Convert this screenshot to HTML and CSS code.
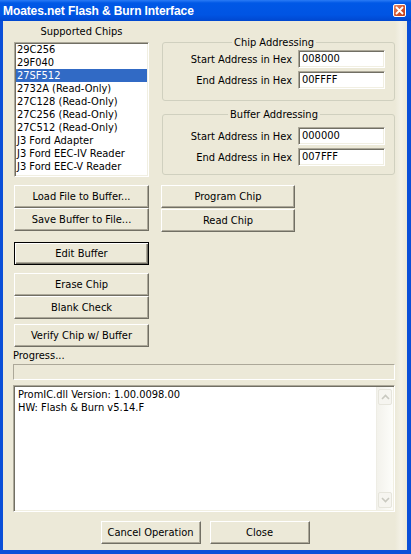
FILE: index.html
```html
<!DOCTYPE html>
<html lang="en">
<head>
	<meta charset="UTF-8">
	<title>Moates.net Flash &amp; Burn Interface</title>
	<link rel="stylesheet" href="styles.css">
</head>
<body>
	<div class="window">
		<div class="titlebar">
			<span class="title">Moates.net Flash &amp; Burn Interface</span>
			<span class="close">
				<svg width="9" height="9" viewBox="0 0 9 9"><path d="M1 1L8 8M8 1L1 8" stroke="#fff" stroke-width="1.8"/></svg>
			</span>
		</div>
		<div class="client">
			<div class="top">
				<div class="chips">
					<div class="caption">Supported Chips</div>
					<ul class="listbox">
						<li>29C256</li>
						<li>29F040</li>
						<li class="on">27SF512</li>
						<li>2732A (Read-Only)</li>
						<li>27C128 (Read-Only)</li>
						<li>27C256 (Read-Only)</li>
						<li>27C512 (Read-Only)</li>
						<li>J3 Ford Adapter</li>
						<li>J3 Ford EEC-IV Reader</li>
						<li>J3 Ford EEC-V Reader</li>
					</ul>
				</div>
				<div class="groups">
					<fieldset class="group chipgroup">
						<legend>Chip Addressing</legend>
						<div class="field"><span>Start Address in Hex</span><span class="edit">008000</span></div>
						<div class="field"><span>End Address in Hex</span><span class="edit">00FFFF</span></div>
					</fieldset>
					<fieldset class="group bufgroup">
						<legend>Buffer Addressing</legend>
						<div class="field"><span>Start Address in Hex</span><span class="edit">000000</span></div>
						<div class="field"><span>End Address in Hex</span><span class="edit">007FFF</span></div>
					</fieldset>
				</div>
			</div>
			<div class="actions">
				<div class="leftcol">
					<button class="btn">Load File to Buffer...</button>
					<button class="btn">Save Buffer to File...</button>
					<button class="btn default editbtn">Edit Buffer</button>
					<button class="btn erasebtn">Erase Chip</button>
					<button class="btn">Blank Check</button>
					<button class="btn verifybtn">Verify Chip w/ Buffer</button>
				</div>
				<div class="rightcol">
					<button class="btn">Program Chip</button>
					<button class="btn readbtn">Read Chip</button>
				</div>
			</div>
			<div class="progress-label">Progress...</div>
			<div class="progress"></div>
			<div class="log">
				<div class="logtext">
					<div>PromIC.dll Version: 1.00.0098.00</div>
					<div>HW: Flash &amp; Burn v5.14.F</div>
				</div>
				<div class="scrollbar">
					<span class="sbbtn"><svg width="9" height="6" viewBox="0 0 9 6"><path d="M1 5L4.5 1.5L8 5" fill="none" stroke="#c9c9c0" stroke-width="1.6"/></svg></span>
					<span class="sbbtn"><svg width="9" height="6" viewBox="0 0 9 6"><path d="M1 1L4.5 4.5L8 1" fill="none" stroke="#c9c9c0" stroke-width="1.6"/></svg></span>
				</div>
			</div>
			<div class="bottom">
				<button class="btn wide">Cancel Operation</button>
				<button class="btn wide">Close</button>
			</div>
		</div>
	</div>
</body>
</html>
```

FILE: styles.css
```css
body{
	margin: 0;
	font-family: "DejaVu Sans Condensed", "Liberation Sans", sans-serif;
	font-size: 11px;
	color: #000;
}
.window{
	width: 411px;
	height: 554px;
	display: flex;
	flex-direction: column;
	background-color: #0a4fd8;
}
.titlebar{
	height: 21px;
	display: flex;
	align-items: center;
	justify-content: space-between;
	padding: 0 5px 0 3px;
	background: linear-gradient(to bottom, #2a7bf5 0, #0058e6 3px, #0054e3 15px, #0047cf 21px);
	color: #fff;
}
.title{
	font: bold 12px "Liberation Sans", sans-serif;
	letter-spacing: -0.1px;
}
.close{
	width: 13px;
	height: 13px;
	box-sizing: border-box;
	border: 1px solid #fff;
	border-radius: 2px;
	background: linear-gradient(135deg, #e88a66, #d0502a 60%, #c2401c);
	display: flex;
	align-items: center;
	justify-content: center;
}
.client{
	flex: 1;
	margin: 0 4px 4px 3px;
	padding-left: 10px;
	background: linear-gradient(to right, #ece9d8 392px, #f3f1e6 398px, #ece9d8 404px);
}
.top{
	display: flex;
	height: 156px;
}
.chips{
	width: 135px;
	margin-left: 1px;
	padding-top: 4px;
}
.caption{
	text-align: center;
	line-height: 13px;
	margin-bottom: 4px;
}
ul,li{
	margin: 0;
	padding: 0;
	list-style: none;
}
.listbox{
	height: 135px;
	box-sizing: border-box;
	overflow: hidden;
	background-color: #fff;
	border: 1px solid;
	border-color: #aca899 #fff #fff #aca899;
	box-shadow: inset 1px 1px #716f64, inset -1px -1px #f1efe2;
	padding: 0 1px;
}
.listbox li{
	line-height: 13px;
	padding-left: 1px;
	white-space: nowrap;
}
.listbox li.on{
	background-color: #316ac5;
	color: #fff;
}
.groups{
	width: 233px;
	margin-left: 13px;
	padding-top: 15px;
}
.group{
	margin: 0;
	min-width: 0;
	border: 1px solid #d0d0bf;
	border-radius: 3px;
	padding: 1px 9px 11px 0;
}
.group legend{
	margin: 0 auto;
	padding: 0 2px;
	line-height: 13px;
}
.bufgroup{
	margin-top: 7px;
	padding-top: 6px;
	padding-bottom: 8px;
}
.field{
	display: flex;
	justify-content: flex-end;
	align-items: center;
	gap: 6px;
}
.field + .field{
	margin-top: 3px;
}
.edit{
	width: 87px;
	height: 18px;
	box-sizing: border-box;
	background-color: #fff;
	border: 1px solid;
	border-color: #aca899 #fff #fff #aca899;
	box-shadow: inset 1px 1px #716f64, inset -1px -1px #f1efe2;
	padding-left: 3px;
	line-height: 16px;
}
.actions{
	display: flex;
	margin-top: 8px;
}
.leftcol,.rightcol{
	display: flex;
	flex-direction: column;
}
.leftcol{
	width: 135px;
	margin-left: 1px;
}
.rightcol{
	width: 134px;
	margin-left: 12px;
}
.btn{
	height: 23px;
	padding: 0;
	font: inherit;
	color: #000;
	background-color: #ece9d8;
	border: 1px solid;
	border-color: #fff #716f64 #716f64 #fff;
	box-shadow: inset -1px -1px #aca899;
	outline: none;
}
.btn.default{
	border-color: #000;
	box-shadow: inset 1px 1px #fff, inset -1px -1px #716f64, inset -2px -2px #aca899;
}
.editbtn{
	margin-top: 11px;
}
.erasebtn{
	margin-top: 8px;
}
.verifybtn{
	margin-top: 5px;
}
.readbtn{
	margin-top: 1px;
}
.progress-label{
	margin-top: 2px;
	line-height: 13px;
}
.progress{
	width: 382px;
	height: 16px;
	box-sizing: border-box;
	margin-top: 2px;
	border: 1px solid;
	border-color: #aca899 #fff #fff #aca899;
}
.log{
	width: 382px;
	height: 127px;
	box-sizing: border-box;
	margin-top: 5px;
	display: flex;
	background-color: #fff;
	border: 1px solid;
	border-color: #aca899 #fff #fff #aca899;
	box-shadow: inset 1px 1px #716f64, inset -1px -1px #f1efe2;
	padding: 1px;
}
.logtext{
	flex: 1;
	padding: 1px 3px;
	line-height: 13px;
}
.scrollbar{
	width: 16px;
	display: flex;
	flex-direction: column;
	justify-content: space-between;
	background: linear-gradient(to right, #f3f2ec, #fdfdfa);
	border-left: 1px solid #eeede5;
}
.sbbtn{
	height: 14px;
	margin: 2px 1px;
	border: 1px solid #e6e5dc;
	border-radius: 2px;
	background-color: #f6f5f0;
	display: flex;
	align-items: center;
	justify-content: center;
}
.bottom{
	display: flex;
	justify-content: center;
	gap: 9px;
	margin-top: 9px;
	padding-right: 10px;
}
.wide{
	width: 100px;
}
```
